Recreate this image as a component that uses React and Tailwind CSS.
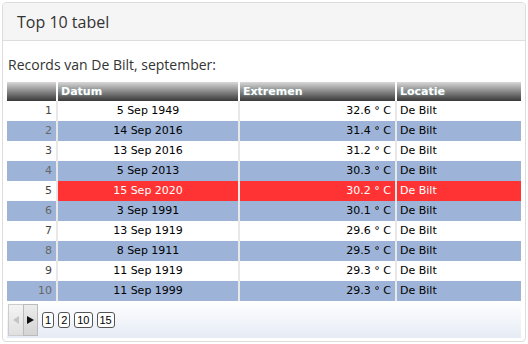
import React from "react";

const rows = [
  ["1", "5 Sep 1949", "32.6 ° C", "De Bilt", ""],
  ["2", "14 Sep 2016", "31.4 ° C", "De Bilt", "blue"],
  ["3", "13 Sep 2016", "31.2 ° C", "De Bilt", ""],
  ["4", "5 Sep 2013", "30.3 ° C", "De Bilt", "blue"],
  ["5", "15 Sep 2020", "30.2 ° C", "De Bilt", "red"],
  ["6", "3 Sep 1991", "30.1 ° C", "De Bilt", "blue"],
  ["7", "13 Sep 1919", "29.6 ° C", "De Bilt", ""],
  ["8", "8 Sep 1911", "29.5 ° C", "De Bilt", "blue"],
  ["9", "11 Sep 1919", "29.3 ° C", "De Bilt", ""],
  ["10", "11 Sep 1999", "29.3 ° C", "De Bilt", "blue"],
];

export default function App() {
  return (
    <div className="w-[528px] h-[344px] bg-white p-[2px]" style={{ fontFamily: "'Open Sans', sans-serif" }}>
      <div className="h-[340px] w-[524px] border border-[#dddddd] rounded-[4px] overflow-hidden flex flex-col">
        <div className="h-[38px] bg-[#f5f5f5] border-b border-[#dddddd] flex items-center pl-[14px] text-[16px] text-[#333333]">
          Top 10 tabel
        </div>
        <div className="px-[4px] pt-[14px]">
          <div className="text-[14px] text-[#333333] leading-[20px] pl-[1px]">Records van De Bilt, september:</div>
          <div className="mt-[7px] w-[514px]" style={{ fontFamily: "'DejaVu Sans', Verdana, sans-serif" }}>
            <div className="flex h-[19px] text-white font-bold text-[11px] bg-gradient-to-b from-[#d8d8d8] via-[#888888] to-[#3a3a3a]">
              <div className="w-[51px] border-r-2 border-white"></div>
              <div className="w-[182px] border-r-2 border-white pl-[3px] leading-[19px] [text-shadow:0_0_2px_#8aa]">Datum</div>
              <div className="w-[157px] border-r-2 border-white pl-[3px] leading-[19px] [text-shadow:0_0_2px_#8aa]">Extremen</div>
              <div className="flex-1 pl-[3px] leading-[19px] [text-shadow:0_0_2px_#8aa]">Locatie</div>
            </div>
            {rows.map((r) => {
              const bg = r[4] === "blue" ? "bg-[#9db4d8]" : r[4] === "red" ? "bg-[#ff3333]" : "bg-white";
              return (
                <div key={r[0]} className={`flex h-[20px] text-[11px] leading-[20px] ${r[4] === "blue" ? "bg-[#9db4d8]" : "bg-white"}`}>
                  <div className={`w-[51px] border-r-2 border-[#e8e8e8] text-right pr-[4px] ${r[4] === "blue" ? "text-[#666666]" : "text-[#444444]"}`}>{r[0]}</div>
                  <div className={`flex w-[182px] border-r-2 border-[#e8e8e8] ${bg} justify-center ${r[4] === "red" ? "text-white" : "text-black"}`}>{r[1]}</div>
                  <div className={`w-[157px] border-r-2 border-[#e8e8e8] ${bg} text-right pr-[4px] ${r[4] === "red" ? "text-white" : "text-black"}`}>{r[2]}</div>
                  <div className={`flex-1 ${bg} pl-[3px] ${r[4] === "red" ? "text-white" : "text-black"}`}>{r[3]}</div>
                </div>
              );
            })}
            <div className="h-[37px] bg-gradient-to-b from-white to-[#e6ebf5] flex items-center gap-[4px] pl-[1px]">
              <div className="flex h-[32px]">
                <div className="w-[15px] h-full border border-[#cccccc] border-r-0 bg-gradient-to-b from-[#f4f4f4] to-[#e0e0e0] flex items-center justify-center">
                  <svg width="6" height="8" viewBox="0 0 6 8"><path d="M6 0 L0 4 L6 8 Z" fill="#c4c4c4" /></svg>
                </div>
                <div className="w-[15px] h-full border border-[#bbbbbb] bg-gradient-to-b from-[#ececec] to-[#d4d4d4] flex items-center justify-center">
                  <svg width="7" height="8" viewBox="0 0 7 8"><path d="M0 0 L7 4 L0 8 Z" fill="#111" /></svg>
                </div>
              </div>
              {["1", "2", "10", "15"].map((p) => (
                <div key={p} className="h-[16px] px-[2px] min-w-[11px] border border-[#555555] rounded-[3px] bg-white text-[11px] leading-[14px] text-black flex items-center justify-center" style={{ fontFamily: "'Liberation Sans', Arial, sans-serif" }}>{p}</div>
              ))}
            </div>
          </div>
        </div>
      </div>
    </div>
  );
}
